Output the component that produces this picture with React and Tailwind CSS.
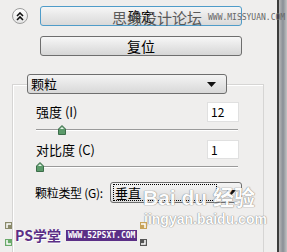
import React from 'react';

const font = "font-['SimSun','Noto_Sans_CJK_SC',sans-serif]";

const Thumb = () => (
  <svg width="8" height="10" viewBox="0 0 8 10" className="block">
    <path d="M4 0.5 L7.5 4 L7.5 9.5 L0.5 9.5 L0.5 4 Z" fill="#5b9a6a" stroke="#3d6d4a" strokeWidth="1" />
    <path d="M4 2 L6 4 L2 4 Z" fill="#e8f4ea" />
  </svg>
);

const Slider = ({ pos }) => (
  <div className="relative h-[10px] w-[202px]">
    <div className="absolute left-0 right-0 top-[4px] h-[2px] border-t border-[#9a9a9a] bg-white" />
    <div className="absolute top-0" style={{ left: pos }}>
      <Thumb />
    </div>
  </div>
);

const Arrow = () => (
  <svg width="9" height="5" viewBox="0 0 9 5">
    <path d="M0 0 H9 L4.5 5 Z" fill="#111" />
  </svg>
);

const Corner = ({ color, d }) => (
  <svg width="7" height="7" viewBox="0 0 7 7" className="block">
    <rect x="0" y="0" width="7" height="7" fill={color} />
    <path d={d} stroke="#fff" strokeWidth="1.5" fill="none" />
  </svg>
);

export default function App() {
  return (
    <div className={`flex h-[252px] w-[287px] overflow-hidden whitespace-nowrap bg-[#efeeed] ${font}`}>
      <div className="relative flex-1 pt-[6px]">
        {/* top buttons */}
        <div className="flex items-center">
          <div className="ml-[12px] flex h-[16px] w-[16px] items-center justify-center rounded-full border border-[#9c9c9c] bg-gradient-to-b from-white to-[#e4e4e4]">
            <svg width="8" height="9" viewBox="0 0 8 9">
              <path d="M1 4 L4 1 L7 4 M1 8 L4 5 L7 8" stroke="#111" strokeWidth="1.6" fill="none" />
            </svg>
          </div>
          <button className="ml-[12px] flex h-[20px] w-[202px] items-center justify-center rounded-[3px] border border-[#4f9cc9] bg-gradient-to-b from-[#f6f6f6] to-[#d9d9d9] text-[13px] text-black">
            确定
          </button>
        </div>
        <div className="mt-[10px] flex">
          <button className="ml-[40px] flex h-[20px] w-[202px] items-center justify-center rounded-[3px] border border-[#6e6e6e] bg-gradient-to-b from-[#f7f7f7] to-[#d6d6d6] text-[14px] text-black">
            复位
          </button>
        </div>

        {/* group */}
        <div className="ml-[12px] mt-[28px] h-[200px] w-[252px] border border-[#d6d5d4] shadow-[inset_1px_1px_0_#fff]">
          <div className="-mt-[11px] ml-[14px] flex h-[20px] w-[200px] items-center justify-between rounded-[3px] border border-[#6e6e6e] bg-gradient-to-b from-[#f4f4f4] to-[#d8d8d8] pl-[3px] pr-[10px] text-[13px] text-black">
            <span>颗粒</span>
            <Arrow />
          </div>

          <div className="ml-[23px] mt-[8px] flex h-[20px] w-[203px] items-center justify-between">
            <span className="text-[13px] text-black">强度 (I)</span>
            <div className="flex h-[20px] w-[32px] items-center border border-[#e0e0e0] bg-white pl-[3px] text-[12px] text-black">12</div>
          </div>
          <div className="ml-[23px] mt-[3px]">
            <Slider pos={22} />
          </div>

          <div className="ml-[23px] mt-[5px] flex h-[19px] w-[203px] items-center justify-between">
            <span className="text-[13px] text-black">对比度 (C)</span>
            <div className="flex h-[19px] w-[32px] items-center border border-[#e0e0e0] bg-white pl-[3px] text-[12px] text-black">1</div>
          </div>
          <div className="ml-[23px] mt-[3px]">
            <Slider pos={0} />
          </div>

          <div className="ml-[22px] mt-[10px] flex items-center">
            <span className="w-[75px] shrink-0 text-[12px] tracking-[-0.3px] text-black">颗粒类型 (G):</span>
            <div className="flex h-[21px] w-[132px] shrink-0 items-center justify-between rounded-[3px] border border-[#6e6e6e] bg-gradient-to-b from-[#f4f4f4] to-[#dcdcdc] pl-[2px] pr-[5px]">
              <span className="h-[17px] w-[104px] border border-dotted border-black pl-[1px] text-[13px] leading-[15px] text-black">垂直</span>
              <Arrow />
            </div>
          </div>
        </div>

        {/* watermarks */}
        <div className="pointer-events-none absolute left-[112px] top-[7px] flex items-center gap-[6px]">
          <span className="text-[15px] text-[#5a5a5a]">思缘设计论坛</span>
          <span className="font-['DejaVu_Sans_Mono',monospace] text-[8px] text-[#666]">WWW.MISSYUAN.COM</span>
        </div>

        <div className="pointer-events-none absolute left-[143px] top-[185px] flex flex-col items-start text-white opacity-90 [text-shadow:0_0_1px_#777,0_0_1px_#777]">
          <span className="font-['Liberation_Sans','Noto_Sans_CJK_SC',sans-serif] text-[21px] font-bold leading-[26px]">Bai du 经验</span>
          <span className="ml-[1px] font-['Liberation_Sans',sans-serif] text-[14px] font-bold leading-[16px]">jingyan.baidu.com</span>
        </div>

        <div className="pointer-events-none absolute left-[5px] top-[222px] flex">
          <div className="flex h-[24px] flex-col justify-between">
            <Corner color="#8a8a6a" d="M6 2 H2 V6" />
            <Corner color="#6aaa6a" d="M2 1 V5 H6" />
          </div>
          <div className="ml-[3px] mt-[3px] flex items-center gap-[5px]">
            <span className="text-[14px] font-bold text-[#5b2f86] [text-shadow:0_0_1px_#fff,1px_1px_0_#fff]">PS学堂</span>
            <span className="bg-[#5b2f86] px-[2px] font-['DejaVu_Sans_Mono',monospace] text-[8px] font-bold leading-[11px] text-white">WWW.52PSXT.COM</span>
          </div>
          <div className="ml-[3px] flex h-[24px] flex-col justify-between">
            <Corner color="#c8a45a" d="M1 2 H5 V6" />
            <Corner color="#555" d="M5 1 V5 H1" />
          </div>
        </div>
      </div>

      {/* right edge */}
      <div className="flex h-full w-[10px]">
        <div className="w-[2px] bg-[#3c3c3c]" />
        <div className="flex-1 bg-gradient-to-r from-[#b8b8b8] via-[#8a8f96] to-[#c4c4c4]" />
      </div>
    </div>
  );
}
